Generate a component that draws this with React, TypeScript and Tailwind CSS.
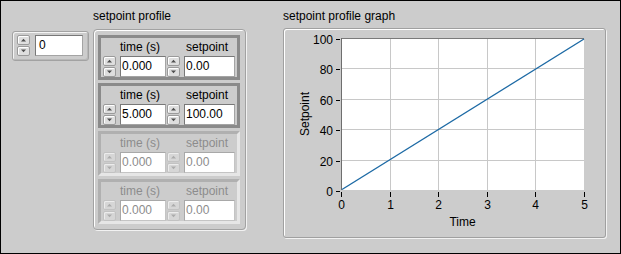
import React from "react";

function Spinner({ disabled = false }: { disabled?: boolean }) {
  const btn = disabled
    ? "border-[#c2c2c2] bg-[#d6d6d6] shadow-[inset_1px_1px_0_#ececec]"
    : "border-[#9a9a9a] bg-[#dedede] shadow-[inset_1px_1px_0_#ffffff]";
  const tri = disabled ? "#ababab" : "#4e4e4e";
  return (
    <div className="flex flex-col w-[13px] h-[21px] gap-[1px] shrink-0">
      <div className={`flex-1 rounded-[2px] border ${btn} flex items-center justify-center`}>
        <svg width="7" height="4" viewBox="0 0 7 4">
          <path d="M1 3.5 L3.5 0.8 L6 3.5 Z" fill={tri} />
        </svg>
      </div>
      <div className={`flex-1 rounded-[2px] border ${btn} flex items-center justify-center`}>
        <svg width="7" height="4" viewBox="0 0 7 4">
          <path d="M1 0.5 L3.5 3.2 L6 0.5 Z" fill={tri} />
        </svg>
      </div>
    </div>
  );
}

function NumBox({
  value,
  wClass,
  disabled = false,
  pad = "pl-[1px]",
}: {
  value: string;
  wClass: string;
  disabled?: boolean;
  pad?: string;
}) {
  const border = disabled
    ? "border-[#c4c4c4] border-t-[#a8a8a8] border-l-[#a8a8a8]"
    : "border-[#a4a4a4] border-t-[#787878] border-l-[#787878]";
  return (
    <div
      className={`${wClass} h-[21px] shrink-0 bg-white border ${border} ${pad} text-[12px] leading-[19px] whitespace-nowrap overflow-hidden ${
        disabled ? "text-[#8c8c8c]" : "text-black"
      }`}
    >
      {value}
    </div>
  );
}

function Element({ t, s, disabled = false }: { t: string; s: string; disabled?: boolean }) {
  const frame = disabled
    ? "border-t-[#b0b0b0] border-l-[#b0b0b0] border-b-[#e6e6e6] border-r-[#e6e6e6]"
    : "border-[#8a8a8a]";
  const label = disabled ? "text-[#8c8c8c]" : "text-black";
  return (
    <div className={`w-[142px] h-[45px] border-[3px] ${frame} pl-[2px] pt-[2px] flex items-end`}>
      <Spinner disabled={disabled} />
      <div className="ml-[4px] flex flex-col">
        <div className={`h-[14px] leading-[14px] text-[12px] mb-[2px] whitespace-nowrap ${label}`}>time (s)</div>
        <NumBox value={t} wClass="w-[46px]" disabled={disabled} />
      </div>
      <div className="ml-[1px]">
        <Spinner disabled={disabled} />
      </div>
      <div className="ml-[4px] flex flex-col">
        <div className={`h-[14px] leading-[14px] text-[12px] mb-[2px] pl-[2px] whitespace-nowrap ${label}`}>setpoint</div>
        <NumBox value={s} wClass="w-[51px]" disabled={disabled} />
      </div>
    </div>
  );
}

function Graph() {
  const xs = [0, 1, 2, 3, 4, 5].map((i) => 57 + Math.round(i * 48.6));
  const ys = [0, 1, 2, 3, 4, 5].map((j) => 9 + Math.round(j * 30.4));
  const yLabels = ["100", "80", "60", "40", "20", "0"];
  const font = "'Liberation Sans', Arial, sans-serif";
  return (
    <svg width="321" height="208" viewBox="0 0 321 208" className="block">
      <rect x="57" y="9" width="243" height="152" fill="#ffffff" />
      {xs.slice(1, 5).map((x) => (
        <line key={"gx" + x} x1={x + 0.5} y1="9" x2={x + 0.5} y2="161" stroke="#c8c8c8" strokeWidth="1" />
      ))}
      {ys.slice(1, 5).map((y) => (
        <line key={"gy" + y} x1="57" y1={y + 0.5} x2="300" y2={y + 0.5} stroke="#c8c8c8" strokeWidth="1" />
      ))}
      <line x1="57" y1="9.5" x2="300" y2="9.5" stroke="#7a7a7a" strokeWidth="1" />
      <line x1="57.5" y1="9" x2="57.5" y2="161" stroke="#6e6e6e" strokeWidth="1" />
      <line x1="58" y1="160.5" x2="300" y2="10" stroke="#1d6aa5" strokeWidth="1.4" />
      {ys.map((y, i) => (
        <g key={"yl" + i}>
          <line x1="52" y1={y + 1.5} x2="56" y2={y + 1.5} stroke="#000" strokeWidth="1" />
          <text x="49" y={y + 5.5} textAnchor="end" fontFamily={font} fontSize="12" fill="#000">
            {yLabels[i]}
          </text>
        </g>
      ))}
      {xs.map((x, i) => (
        <g key={"xl" + i}>
          <line x1={x + 0.5} y1="163" x2={x + 0.5} y2="168" stroke="#000" strokeWidth="1" />
          <text x={x + 0.5} y="179.5" textAnchor="middle" fontFamily={font} fontSize="12" fill="#000">
            {i}
          </text>
        </g>
      ))}
      <text x="178.5" y="197" textAnchor="middle" fontFamily={font} fontSize="12" fill="#000">
        Time
      </text>
      <text
        x="25"
        y="85"
        transform="rotate(-90 25 85)"
        textAnchor="middle"
        fontFamily={font}
        fontSize="12"
        fill="#000"
      >
        Setpoint
      </text>
    </svg>
  );
}

export default function App() {
  return (
    <div className="w-[621px] h-[254px] bg-[#cccccc] border border-black flex items-start font-['Liberation_Sans',Arial,sans-serif] text-black overflow-hidden">
      {/* numeric control */}
      <div className="ml-[11px] mt-[30px] w-[77px] h-[30px] rounded-[3px] border border-[#a2a2a2] shadow-[inset_1px_1px_0_#f4f4f4,inset_-1px_-1px_0_#b8b8b8] pl-[4px] pt-[3px] flex items-start">
        <Spinner />
        <div className="ml-[5px]">
          <NumBox value="0" wClass="w-[48px]" pad="pl-[3px]" />
        </div>
      </div>

      {/* array */}
      <div className="ml-[4px] mt-[8px] flex flex-col">
        <div className="h-[15px] leading-[15px] text-[12px] mb-[5px] whitespace-nowrap">setpoint profile</div>
        <div className="w-[153px] h-[201px] rounded-[4px] border border-[#a2a2a2] shadow-[inset_1px_1px_0_#ffffff,1px_1px_0_#f2f2f2] pl-[4px] pt-[5px] flex flex-col gap-[3px]">
          <Element t="0.000" s="0.00" />
          <Element t="5.000" s="100.00" />
          <Element t="0.000" s="0.00" disabled />
          <Element t="0.000" s="0.00" disabled />
        </div>
      </div>

      {/* graph */}
      <div className="ml-[37px] mt-[8px] flex flex-col">
        <div className="h-[15px] leading-[15px] text-[12px] mb-[4px] whitespace-nowrap">setpoint profile graph</div>
        <div className="w-[323px] h-[210px] rounded-[3px] border border-[#a0a0a0] shadow-[inset_1px_1px_0_#ffffff,1px_1px_0_#f2f2f2]">
          <Graph />
        </div>
      </div>
    </div>
  );
}
